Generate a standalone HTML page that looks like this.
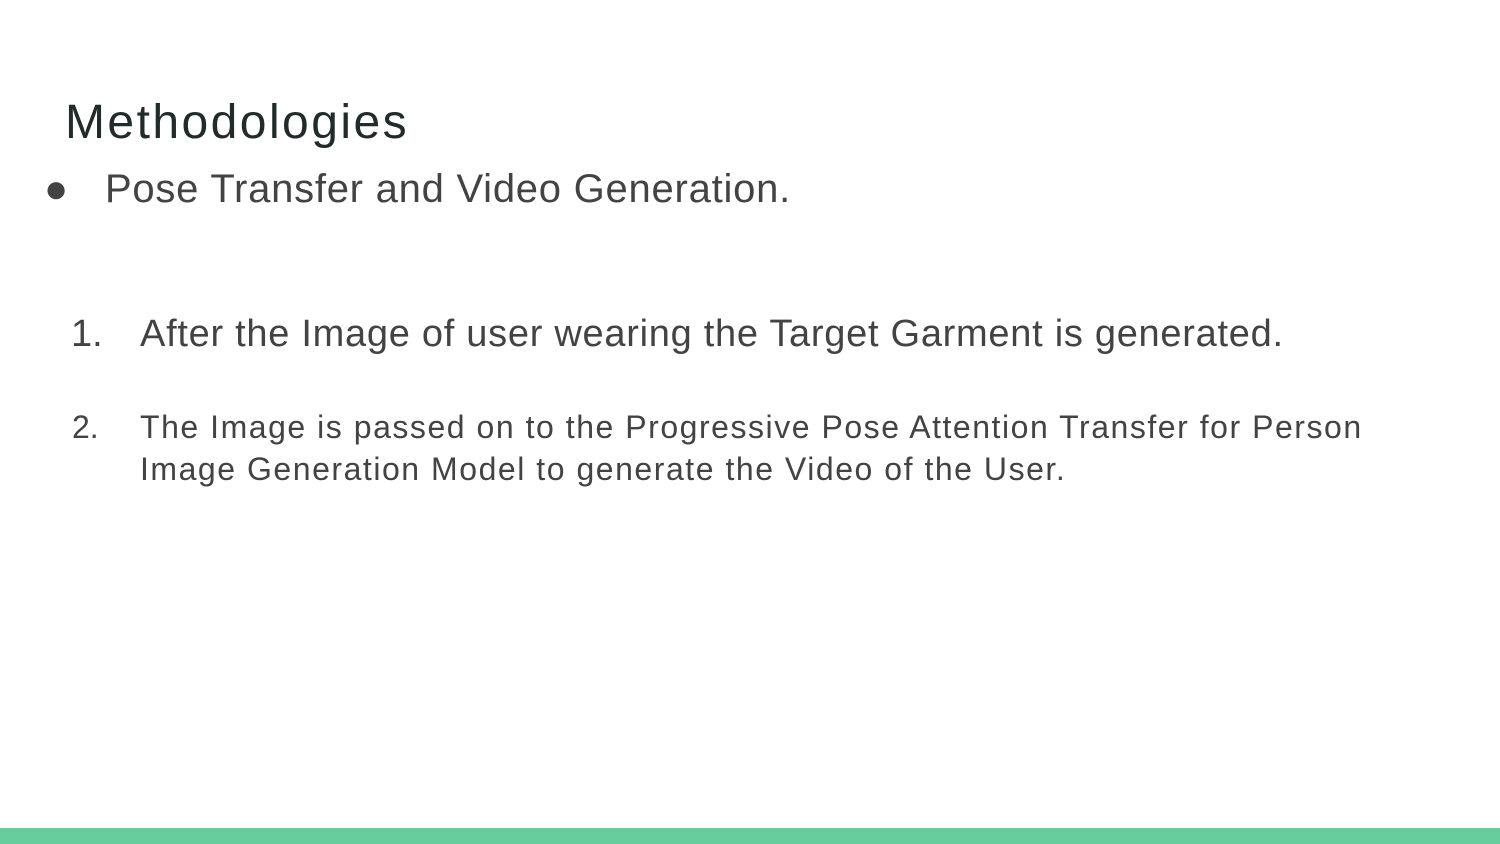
<!DOCTYPE html>
<html><head><meta charset="utf-8"><style>
html,body{margin:0;padding:0;}
body{width:1500px;height:844px;position:relative;overflow:hidden;background:#fff;font-family:"Liberation Sans",sans-serif;}
.t{position:absolute;white-space:nowrap;line-height:1;}
#bar{position:absolute;left:0;top:828px;width:1500px;height:16px;background:#66cc99;}
</style></head><body>
<div class="t" style="left:65px;top:99px;font-size:48px;color:#212b2b;letter-spacing:2.45px;">Methodologies</div>
<div class="t" style="left:44px;top:169px;font-size:40px;color:#434343;">●</div>
<div class="t" style="left:105px;top:169px;font-size:40px;color:#434343;letter-spacing:0.75px;">Pose Transfer and Video Generation.</div>
<div class="t" style="left:71px;top:315px;font-size:38px;color:#434343;">1.</div>
<div class="t" style="left:140px;top:315px;font-size:38px;color:#434343;letter-spacing:0.72px;">After the Image of user wearing the Target Garment is generated.</div>
<div class="t" style="left:72px;top:406px;font-size:32px;line-height:42px;color:#434343;">2.</div>
<div class="t" style="left:140px;top:406px;font-size:32px;line-height:42px;color:#434343;letter-spacing:1.53px;">The Image is passed on to the Progressive Pose Attention Transfer for Person<br>Image Generation Model to generate the Video of the User.</div>
<div id="bar"></div>
</body></html>
